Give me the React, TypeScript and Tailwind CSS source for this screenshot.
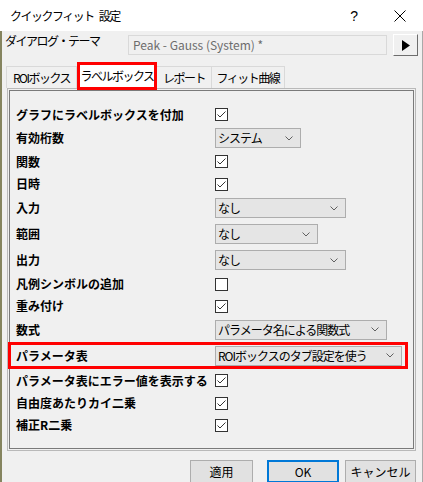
import React from 'react';

const jp = { fontFamily: '"Noto Sans CJK JP", "Noto Sans", sans-serif' };

type Row =
  | { label: string; kind: 'check'; checked: boolean; h: number }
  | { label: string; kind: 'select'; value: string; w: number; h: number; hot?: boolean };

const ROWS: Row[] = [
  { label: 'グラフにラベルボックスを付加', kind: 'check', checked: true, h: 23 },
  { label: '有効桁数', kind: 'select', value: 'システム', w: 86, h: 24 },
  { label: '関数', kind: 'check', checked: true, h: 23 },
  { label: '日時', kind: 'check', checked: true, h: 22 },
  { label: '入力', kind: 'select', value: 'なし', w: 131, h: 26 },
  { label: '範囲', kind: 'select', value: 'なし', w: 103, h: 26 },
  { label: '出力', kind: 'select', value: 'なし', w: 131, h: 26 },
  { label: '凡例シンボルの追加', kind: 'check', checked: false, h: 22 },
  { label: '重み付け', kind: 'check', checked: true, h: 22 },
  { label: '数式', kind: 'select', value: 'パラメータ名による関数式', w: 172, h: 25 },
  { label: 'パラメータ表', kind: 'select', value: 'ROIボックスのタブ設定を使う', w: 187, h: 21, hot: true },
  { label: 'パラメータ表にエラー値を表示する', kind: 'check', checked: true, h: 23 },
  { label: '自由度あたりカイ二乗', kind: 'check', checked: true, h: 22 },
  { label: '補正R二乗', kind: 'check', checked: true, h: 22 },
];

function CheckBox({ checked }: { checked: boolean }) {
  return (
    <svg width="13" height="13" viewBox="0 0 13 13">
      <rect x="0.5" y="0.5" width="12" height="12" fill="#ffffff" stroke="#333333" />
      {checked && <polyline points="2.5,6.5 5,9 10.5,3.5" fill="none" stroke="#333333" strokeWidth="1" />}
    </svg>
  );
}

function Select({ value, w }: { value: string; w: number }) {
  return (
    <div
      className="h-[20px] flex items-center justify-between bg-[#e5e5e5] border border-[#adadad] pl-[2px] pr-[7px] text-[12px] text-black"
      style={{ width: w }}
    >
      <span className="leading-none whitespace-nowrap tracking-[-1px]">{value}</span>
      <svg width="8" height="5" viewBox="0 0 8 5">
        <polyline points="0.5,0.5 4,4 7.5,0.5" fill="none" stroke="#606060" strokeWidth="1" />
      </svg>
    </div>
  );
}

function Control({ row }: { row: Row }) {
  if (row.kind === 'check') return <CheckBox checked={row.checked} />;
  return <Select value={row.value} w={row.w} />;
}

export default function App() {
  return (
    <div className="w-[423px] h-[482px] overflow-hidden bg-[#f0f0f0] flex flex-col text-black" style={jp}>
      {/* title bar */}
      <div className="h-[31px] bg-white flex items-center pl-[10px] shrink-0">
        <span className="text-[12px] leading-none tracking-[-1.5px] whitespace-nowrap">
          クイックフィット<span className="ml-[5px]">設定</span>
        </span>
        <span className="ml-auto mr-[36px] text-[14px] leading-none" style={{ fontFamily: '"Liberation Sans", sans-serif' }}>?</span>
        <svg width="12" height="12" viewBox="0 0 12 12" className="mr-[17px]">
          <path d="M0.5 0.5 L11.5 11.5 M11.5 0.5 L0.5 11.5" stroke="#000000" strokeWidth="1" />
        </svg>
      </div>

      <div className="flex-1 flex flex-col border-l-2 border-l-[#85845f] border-r border-r-[#a9a9a9]">
        {/* dialog theme */}
        <div className="flex items-start mt-[3px] pl-[3px]">
          <span className="w-[123px] text-[12px] leading-[14px] tracking-[-1.5px] whitespace-nowrap">ダイアログ・テーマ</span>
          <div className="mt-[1px] w-[259px] h-[20px] border border-[#d9d9d9] bg-[#f0f0f0] flex items-center pl-[4px] text-[12px] text-[#6d6d6d] leading-none">
            Peak - Gauss (System) *
          </div>
          <button className="ml-[6px] w-[25px] h-[22px] bg-[#f0f0f0] border border-t-white border-l-white border-r-[#6d6d6d] border-b-[#6d6d6d] flex items-center justify-center">
            <svg width="8" height="11" viewBox="0 0 8 11">
              <polygon points="0,0 8,5.5 0,11" fill="#000000" />
            </svg>
          </button>
        </div>

        {/* tabs */}
        <div className="mt-[6px] h-[26px] flex items-end pl-[4px] text-[12px] tracking-[-1.5px] whitespace-nowrap">
          <div className="w-[71px] h-[22px] border border-b-0 border-[#d9d9d9] flex items-center justify-center leading-none">ROIボックス</div>
          <div className="relative z-10 w-[80px] h-[28px] -mb-[2px] border-[3px] border-[#ff0000] bg-white flex items-center justify-center leading-none">
            ラベルボックス
          </div>
          <div className="w-[55px] h-[22px] border border-b-0 border-l-0 border-[#d9d9d9] flex items-center justify-center leading-none">レポート</div>
          <div className="w-[73px] h-[22px] border border-b-0 border-l-0 border-[#d9d9d9] flex items-center justify-center leading-none">フィット曲線</div>
        </div>

        {/* panel */}
        <div className="ml-[5px] w-[409px] h-[363px] border border-[#b9b9b9] p-[1px]">
          <div className="h-full border border-[#7a7a7a] pt-[12px] flex flex-col">
            {ROWS.map((row) =>
              row.kind === 'select' && row.hot ? (
                <div key={row.label} className="-ml-[2px] w-[400px] border-[3px] border-[#ff0000] pl-[5px] flex items-center" style={{ height: row.h + 6 }}>
                  <span className="w-[199px] text-[12px] font-bold leading-none whitespace-nowrap">{row.label}</span>
                  <Control row={row} />
                </div>
              ) : (
                <div key={row.label} className="pl-[6px] flex items-center" style={{ height: row.h }}>
                  <span className="w-[199px] text-[12px] font-bold leading-none whitespace-nowrap">{row.label}</span>
                  <Control row={row} />
                </div>
              )
            )}
          </div>
        </div>

        {/* buttons */}
        <div className="mt-[9px] flex justify-end pr-[6px] text-[12px]">
          <button className="w-[63px] h-[23px] bg-[#e1e1e1] border border-[#adadad] leading-none">適用</button>
          <button className="ml-[14px] w-[72px] h-[23px] bg-[#e1e1e1] border-2 border-[#0078d7] leading-none">OK</button>
          <button className="ml-[6px] w-[71px] h-[23px] bg-[#e1e1e1] border border-[#adadad] leading-none">キャンセル</button>
        </div>
      </div>
    </div>
  );
}
